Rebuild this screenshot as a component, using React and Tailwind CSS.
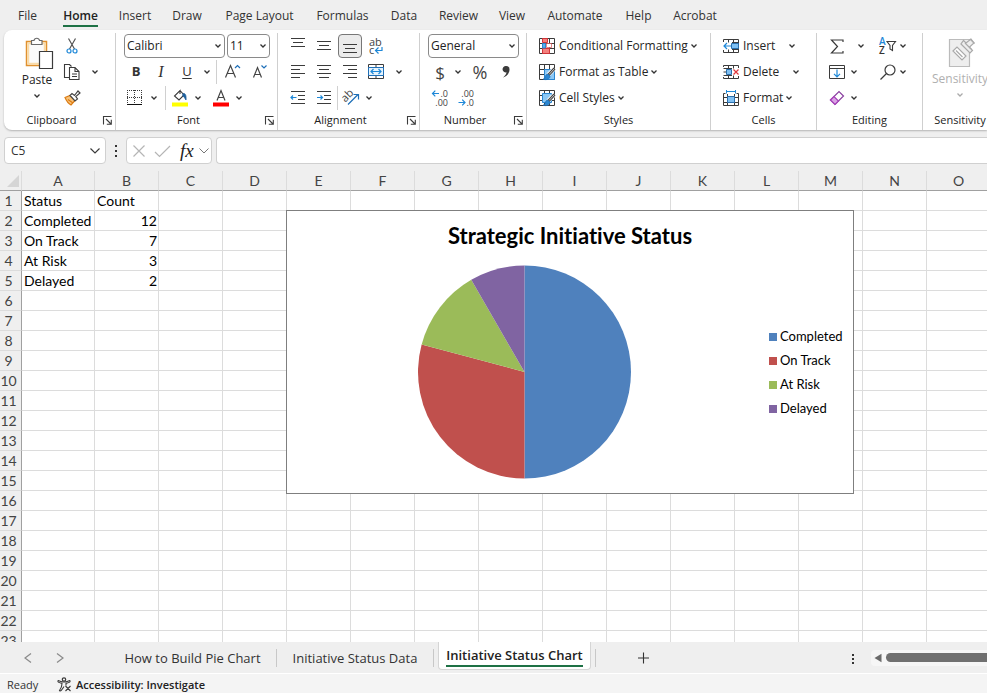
import React from "react";

const UI = "font-['Open_Sans','Noto_Sans',sans-serif]";
const CELL = "font-['Lato','Open_Sans',sans-serif] [font-variant-ligatures:none]";

const MENU = [
  ["File", "w-[37px]"],
  ["Home", "w-[69px]"],
  ["Insert", "w-[40px]"],
  ["Draw", "w-[64px]"],
  ["Page Layout", "w-[81px]"],
  ["Formulas", "w-[85px]"],
  ["Data", "w-[38px]"],
  ["Review", "w-[71px]"],
  ["View", "w-[36px]"],
  ["Automate", "w-[90px]"],
  ["Help", "w-[37px]"],
  ["Acrobat", "w-[76px]"],
];

const COLUMNS = "ABCDEFGHIJKLMNO".split("");
const ROWS = Array.from({ length: 23 }, (_, i) => i + 1);
const DATA = [
  ["Status", "Count"],
  ["Completed", 12],
  ["On Track", 7],
  ["At Risk", 3],
  ["Delayed", 2],
];

const SLICES = [
  { label: "Completed", value: 12, fill: "fill-[#4f81bd]", bg: "bg-[#4f81bd]" },
  { label: "On Track", value: 7, fill: "fill-[#c0504d]", bg: "bg-[#c0504d]" },
  { label: "At Risk", value: 3, fill: "fill-[#9bbb59]", bg: "bg-[#9bbb59]" },
  { label: "Delayed", value: 2, fill: "fill-[#8064a2]", bg: "bg-[#8064a2]" },
];

function Svg({ w = 18, h = 18, className = "", children }) {
  return (
    <svg
      width={w}
      height={h}
      viewBox={`0 0 ${w} ${h}`}
      fill="none"
      stroke="#3b3b3b"
      strokeWidth="1.2"
      className={`shrink-0 overflow-visible ${className}`}
      aria-hidden="true"
    >
      {children}
    </svg>
  );
}

function Chevron({ color = "#333" }) {
  return (
    <Svg w={8} h={6}>
      <path d="M1.500 1.500 4 4l2.500-2.500" stroke={color} strokeWidth="1.300" />
    </Svg>
  );
}

function More({ label, className = "" }) {
  return (
    <button aria-label={label} className={`flex h-6 w-[10px] shrink-0 items-center justify-center ${className}`}>
      <Chevron />
    </button>
  );
}

function Tool({ label, className = "w-[26px]", children }) {
  return (
    <button aria-label={label} className={`flex h-6 shrink-0 items-center justify-center ${className}`}>
      {children}
    </button>
  );
}

function Row({ className = "", children }) {
  return <div className={`flex h-[26px] items-center ${className}`}>{children}</div>;
}

function Rule() {
  return <div className="h-6 w-px shrink-0 bg-[#d0d0d0]" />;
}

function Group({ name, width, pad = "", launcher = false, last = false, children }) {
  return (
    <section
      aria-label={name}
      className={`flex shrink-0 flex-col ${width} ${last ? "" : "border-r border-[#cfcfcf]"}`}
    >
      <div className={`h-[79px] ${pad}`}>{children}</div>
      <div className="flex h-4 items-center text-[11px] text-[#222]">
        <span className="flex-1 text-center">{name}</span>
        {launcher && (
          <button aria-label={`${name} settings`} className="flex h-4 w-4 items-center justify-center">
            <Svg w={9} h={9}>
              <path d="M.5 8.500V.5h8M3 3l5 5M8.300 3.800v4.500H3.800" strokeWidth="1.100" />
            </Svg>
          </button>
        )}
      </div>
    </section>
  );
}

function Combo({ label, value, options, className }) {
  return (
    <div className={`grid h-6 shrink-0 items-center rounded border border-[#8a8a8a] bg-white ${className}`}>
      <select
        aria-label={label}
        defaultValue={value}
        className="col-start-1 row-start-1 h-full w-full appearance-none bg-transparent pl-[2px] text-[12px] text-[#222] outline-none"
      >
        {options.map((o) => (
          <option key={o}>{o}</option>
        ))}
      </select>
      <span className="pointer-events-none col-start-1 row-start-1 justify-self-end pr-[2px]">
        <Chevron />
      </span>
    </div>
  );
}

function Lines({ d }) {
  return (
    <Svg w={16} h={16}>
      <path d={d} strokeWidth="1" />
    </Svg>
  );
}

function TableBase({ children }) {
  return (
    <Svg w={16} h={16}>
      <path d="M.5.5h15v15H.5zM.5 5.500h15M.5 10.500h15M5.500.5v15M10.500.5v15" strokeWidth="1" />
      {children}
    </Svg>
  );
}

const Brush = () => (
  <>
    <path d="M15.500 4.500 9 11" stroke="#fff" strokeWidth="4" />
    <path d="M15.500 4.500 9.500 11" stroke="#444" strokeWidth="2.600" />
    <path d="M15 5 10 10.500" stroke="#ddd" strokeWidth=".8" />
    <path d="M9 10c-2 0-2.500 2-3 3.500-.3 1-1 1.500-2 1.700 3 1 7 .3 7-3z" fill="#2a86d1" stroke="#1d69ad" strokeWidth=".7" />
  </>
);

const ConditionalIcon = () => (
  <TableBase>
    <path d="M3.500.5h5v4h-5zM3.500 10.500h7v5h-7z" fill="#f4807d" stroke="#d13438" strokeWidth="1" />
    <path d="M3.500 5.500h3v4.500h-3z" fill="#5bb0ec" stroke="#2a86d1" strokeWidth="1" />
    <path d="M7.500 5.500h5v4h-5z" fill="#fff" stroke="#d13438" strokeWidth=".6" />
  </TableBase>
);

const FormatTableIcon = () => (
  <TableBase>
    <path d="M5.500 5.500h10v10h-10z" fill="#8cc8f5" stroke="#2a86d1" strokeWidth="1" />
    <Brush />
  </TableBase>
);

const CellStylesIcon = () => (
  <TableBase>
    <path d="M3.500 3.500h9v9h-9z" fill="#8cc8f5" stroke="#2a86d1" strokeWidth="1" />
    <Brush />
  </TableBase>
);

const InsertCellsIcon = () => (
  <Svg w={16} h={16}>
    <path d="M.5 4V1.500h15v13H.5V12M5.500 1.500v3M10.500 1.500v13M5.500 11.500v3M9 4.500h6.500M9 11.500h6.500" strokeWidth="1" />
    <path d="M8.500 5.500h7v5h-7z" fill="#7fc0f3" stroke="#2a6fad" strokeWidth="1" />
    <path d="M8 8H1M4 5 1 8l3 3" stroke="#1e88d8" />
  </Svg>
);

const DeleteCellsIcon = () => (
  <Svg w={16} h={16}>
    <path d="M.5 3V1.500h15V4M.5 13v1.500h15V12M5.500 1.500v3M10.500 1.500v3M5.500 11.500v3M10.500 11.500v3M.5 4.500H9M.5 11.500H9M.5 8H3" strokeWidth="1" />
    <path d="M3.500 5.500h5v5h-5z" fill="#7fc0f3" stroke="#2a6fad" strokeWidth="1" />
    <path d="m10.500 5.500 5 5M15.500 5.500l-5 5" stroke="#e0383c" />
  </Svg>
);

const FormatCellsIcon = () => (
  <Svg w={16} h={16}>
    <path d="M2.500 3.500H.5v12h15v-12h-2M.5 7.500h15M.5 12.500h15M4.500 4v11.500M11.500 4v11.500" strokeWidth="1" />
    <path d="M4.500 6.500h7v6h-7z" fill="#7fc0f3" stroke="#2a6fad" strokeWidth="1" />
    <path d="M3 1.500h10M3.500 0v3.500M12.500 0v3.500" stroke="#1e88d8" strokeWidth="1" />
  </Svg>
);

function Labelled({ icon, text, textWidth = "" }) {
  return (
    <button className="flex h-6 items-center text-[12px] text-[#262626]">
      {icon}
      <span className={`mr-[2px] ml-1 whitespace-nowrap text-left ${textWidth}`}>{text}</span>
      <Chevron />
    </button>
  );
}

function DecimalIcon({ top, bottom, arrowTop }) {
  return (
    <Svg w={18} h={18}>
      <g fill="#444" stroke="none" fontSize="9" fontFamily="Open Sans, sans-serif">
        <text x="17" y="8" textAnchor="end">{top}</text>
        <text x="17" y="17" textAnchor="end">{bottom}</text>
      </g>
      <path
        d={arrowTop ? "M8 4.500H1.500M4.300 1.700 1.500 4.500l2.800 2.800" : "M1.500 13.500H8M5.200 10.700 8 13.500l-2.800 2.800"}
        stroke="#1e88d8"
      />
    </Svg>
  );
}

function Ribbon() {
  return (
    <div className="ml-1 flex h-[100px] shrink-0 overflow-hidden rounded-l-lg bg-white pt-[3px] shadow-[0_1px_2px_rgba(0,0,0,0.25)]">
      <Group name="Clipboard" width="w-[112px]" pad="pl-[14px] flex" launcher>
        <button className="flex w-[38px] flex-col items-center pt-1 text-[12px] text-[#262626]">
          <Svg w={28} h={32} className="ml-1">
            <path d="M1.500 4.500h20v24h-20z" fill="#fff3da" stroke="#e0912f" strokeWidth="1.500" />
            <path d="M3.500 6.500h16v20h-16z" fill="#fbfbfb" stroke="#f9dba8" strokeWidth="1.500" />
            <path d="M6.500 7.500v-4H9a2.800 2.800 0 0 1 5.500 0H17v4z" fill="#fff" stroke="#6b6b6b" />
            <path d="M14.500 14.500h13v17h-13z" fill="#fff" stroke="#3b3b3b" />
          </Svg>
          <span className="pt-px leading-5">Paste</span>
          <span className="pt-[3px]"><Chevron /></span>
        </button>
        <div className="pl-[6px]">
          <Row>
            <Tool label="Cut" className="w-5">
              <Svg w={12} h={16}>
                <path d="M2.500.5 8.500 11M9.500.5 3.500 11" stroke="#555" />
                <circle cx="3" cy="13" r="2" stroke="#1e88d8" />
                <circle cx="9" cy="13" r="2" stroke="#1e88d8" />
              </Svg>
            </Tool>
          </Row>
          <Row>
            <Tool label="Copy" className="w-5">
              <Svg w={16} h={16}>
                <path d="M5 13.500H.5V.5h5l2 2" strokeWidth="1.100" />
                <path d="M5.500 3.500h5.500l4 4v8H5.500zM11 3.500v4h4M8 10h5M8 12.500h5" fill="#fff" strokeWidth="1.100" />
              </Svg>
            </Tool>
            <More label="Copy options" className="ml-2" />
          </Row>
          <Row>
            <Tool label="Format Painter" className="w-5">
              <Svg w={17} h={16}>
                <path d="m1 7.500 5-2 5 5-4 4.500C5 14 2.500 11 1 7.500z" fill="#f7c27a" stroke="#dc7b12" />
                <path d="m4 9.500 5 3.500" stroke="#dc7b12" />
                <path d="m6 5.500 2-2 2.500 2L14 1l2 2-4.200 3.500L13.500 9l-2.500 2z" fill="#fff" stroke="#444" />
              </Svg>
            </Tool>
          </Row>
        </div>
      </Group>

      <Group name="Font" width="w-[162px]" pad="pl-2" launcher>
        <Row className="gap-[2px]">
          <Combo label="Font name" value="Calibri" options={["Calibri", "Arial", "Cambria"]} className="w-[101px]" />
          <Combo label="Font size" value="11" options={["10", "11", "12", "14"]} className="w-[43px]" />
        </Row>
        <Row>
          <Tool label="Bold" className="w-6"><span className="text-[13px] font-bold text-[#333]">B</span></Tool>
          <Tool label="Italic"><span className="font-['Liberation_Serif',serif] text-[16px] italic text-[#333]">I</span></Tool>
          <Tool label="Underline"><span className="text-[13px] text-[#333] underline underline-offset-2">U</span></Tool>
          <More label="Underline options" className="mr-1 ml-[2px]" />
          <Rule />
          <Tool label="Increase font size" className="w-[30px]">
            <Svg w={17} h={16}>
              <path d="M1.500 13.500 6.500 1.500l5 12M3.200 9.500h6.600" stroke="#444" />
              <path d="m11 4 2.500-2.500L16 4" stroke="#1e6fb8" />
            </Svg>
          </Tool>
          <Tool label="Decrease font size" className="w-6">
            <Svg w={15} h={16}>
              <path d="M1.500 13.500 5.500 3.500l4 10M2.900 10.500h5.200" stroke="#444" />
              <path d="m9.500 1.500 2.500 2.500 2.500-2.500" stroke="#1e6fb8" />
            </Svg>
          </Tool>
        </Row>
        <Row>
          <Tool label="Borders" className="w-[22px]">
            <Svg w={16} h={16}>
              <path d="M0 .5h15M0 7.500h15M.5 0v13M7.500 0v13M14.500 0v13" strokeWidth="1" strokeDasharray="1 1" />
              <path d="M0 14.500h15" stroke="#111" strokeWidth="1" />
            </Svg>
          </Tool>
          <More label="Border options" className="mr-[6px] ml-[3px]" />
          <Rule />
          <Tool label="Fill color" className="ml-[2px] w-6">
            <Svg w={16} h={18}>
              <path d="M0 13.500h16v4H0z" fill="#ff0" stroke="none" />
              <path d="m8 1.500 4 4.500-5 5-4.500-4L8 1.500V5" strokeWidth="1.100" />
              <path d="M10.500 5c2.500-1.500 4 1 3.500 6-1-1-1.500-3.500-3.500-4" fill="#1e5f9c" stroke="#1e5f9c" strokeWidth=".8" />
            </Svg>
          </Tool>
          <More label="Fill color options" className="ml-px" />
          <Tool label="Font color" className="ml-[6px] w-6">
            <Svg w={16} h={18}>
              <path d="M0 13.500h16v4H0z" fill="#f00" stroke="none" />
              <path d="M4 11.500 8 1.500l4 10M5.300 8.500h5.400" stroke="#444" />
            </Svg>
          </Tool>
          <More label="Font color options" className="ml-px" />
        </Row>
      </Group>

      <Group name="Alignment" width="w-[142px]" pad="pl-[7px]" launcher>
        <Row>
          <Tool label="Top align"><Lines d="M1 .5h14M3 4.500h10M1 8.500h14" /></Tool>
          <Tool label="Middle align"><Lines d="M1 3.500h14M3 7.500h10M1 11.500h14" /></Tool>
          <button aria-label="Bottom align" aria-pressed="true" className="mx-px flex h-6 w-6 items-center justify-center rounded border border-[#777] bg-[#ebebeb]">
            <Lines d="M1 6.500h14M3 10.500h10M1 14.500h14" />
          </button>
          <Tool label="Wrap text">
            <Svg w={14} h={16}>
              <g fill="#444" stroke="none" fontSize="11" fontFamily="Open Sans, sans-serif">
                <text x="0" y="8">ab</text>
                <text x="0" y="16">c</text>
              </g>
              <path d="M13 9v3.500H7M9.500 9.500l-3 3 3 3" stroke="#1e88d8" />
            </Svg>
          </Tool>
        </Row>
        <Row>
          <Tool label="Align left"><Lines d="M1 1.500h14M1 5.500h9M1 9.500h14M1 13.500h9" /></Tool>
          <Tool label="Center"><Lines d="M1 1.500h14M3 5.500h10M1 9.500h14M3 13.500h10" /></Tool>
          <Tool label="Align right"><Lines d="M1 1.500h14M6 5.500h9M1 9.500h14M6 13.500h9" /></Tool>
          <Tool label="Merge and center">
            <Svg w={16} h={16}>
              <path d="M.5.5h15v14H.5zM8 .5v3M8 11.500v3" strokeWidth="1" />
              <path d="M.5 3.500h15v8H.5z" fill="#e6f3fc" stroke="#1e6fb8" strokeWidth="1" />
              <path d="M3 7.500h10M5.500 5 3 7.500 5.500 10M10.500 5 13 7.500 10.500 10" stroke="#1e88d8" />
            </Svg>
          </Tool>
          <More label="Merge options" className="ml-[5px]" />
        </Row>
        <Row>
          <Tool label="Decrease indent">
            <Svg w={16} h={16}>
              <path d="M1 1.500h14M8 5.500h7M8 9.500h7M1 13.500h14" strokeWidth="1" />
              <path d="M6.500 7.500H1M3 5.500l-2 2 2 2" stroke="#1e88d8" />
            </Svg>
          </Tool>
          <Tool label="Increase indent">
            <Svg w={16} h={16}>
              <path d="M1 1.500h14M8 5.500h7M8 9.500h7M1 13.500h14" strokeWidth="1" />
              <path d="M1 7.500h5.500M4.500 5.500l2 2-2 2" stroke="#1e88d8" />
            </Svg>
          </Tool>
          <Rule />
          <Tool label="Orientation">
            <Svg w={18} h={18}>
              <text x="0" y="10" transform="rotate(-45 6 8)" fill="#444" stroke="none" fontSize="11" fontFamily="Open Sans, sans-serif">ab</text>
              <path d="M6 15.500 16 5.500M11.500 5.500h5v5" stroke="#1e6fb8" />
            </Svg>
          </Tool>
          <More label="Orientation options" />
        </Row>
      </Group>

      <Group name="Number" width="w-[107px]" pad="pl-2" launcher>
        <Row>
          <Combo label="Number format" value="General" options={["General", "Number", "Currency"]} className="w-[91px]" />
        </Row>
        <Row>
          <Tool label="Currency" className="w-6"><span className="text-[17px] leading-none text-[#444]">$</span></Tool>
          <More label="Currency options" className="mr-1 ml-px" />
          <Tool label="Percent"><span className="text-[18px] leading-none text-[#444]">%</span></Tool>
          <Tool label="Comma style">
            <Svg w={10} h={14}>
              <path d="M5 1a3.200 3.200 0 1 0 .5 6.300C5.300 9.500 4 11 2 12.500c4-1 6.500-4.500 6.500-8A3.400 3.400 0 0 0 5 1z" fill="#3b3b3b" stroke="none" />
            </Svg>
          </Tool>
        </Row>
        <Row>
          <Tool label="Increase decimal" className="w-6"><DecimalIcon top=".0" bottom=".00" arrowTop /></Tool>
          <Tool label="Decrease decimal" className="w-7"><DecimalIcon top=".00" bottom=".0" /></Tool>
        </Row>
      </Group>

      <Group name="Styles" width="w-[184px]" pad="pl-3">
        <Row><Labelled icon={<ConditionalIcon />} text="Conditional Formatting" /></Row>
        <Row><Labelled icon={<FormatTableIcon />} text="Format as Table" /></Row>
        <Row><Labelled icon={<CellStylesIcon />} text="Cell Styles" /></Row>
      </Group>

      <Group name="Cells" width="w-[106px]" pad="pl-3">
        <Row><Labelled icon={<InsertCellsIcon />} text="Insert" textWidth="w-[43px]" /></Row>
        <Row><Labelled icon={<DeleteCellsIcon />} text="Delete" textWidth="w-[47px]" /></Row>
        <Row><Labelled icon={<FormatCellsIcon />} text="Format" /></Row>
      </Group>

      <Group name="Editing" width="w-[106px]" pad="pl-2">
        <Row>
          <Tool label="AutoSum" className="w-6">
            <Svg w={14} h={15}>
              <path d="M13 3V1H1.500l6 6.500-6 6.500H13v-2" />
            </Svg>
          </Tool>
          <More label="AutoSum options" className="mr-[11px] ml-[7px]" />
          <Tool label="Sort and filter" className="w-5">
            <Svg w={17} h={18}>
              <g stroke="none" fontSize="10" fontWeight="600" fontFamily="Open Sans, sans-serif">
                <text x="0" y="8" fill="#1e88d8">A</text>
                <text x="0" y="17" fill="#333">Z</text>
              </g>
              <path d="M8 4.500h8.500L13.500 8.500v5L11 12V8.500z" strokeWidth="1.100" />
            </Svg>
          </Tool>
          <More label="Sort options" className="ml-px" />
        </Row>
        <Row>
          <Tool label="Fill" className="w-6">
            <Svg w={16} h={15}>
              <path d="M.5.5h15v13H.5zM.5 3.500h15" strokeWidth="1" />
              <path d="M8 4.500v7M5 8.800l3 3 3-3" stroke="#1e88d8" />
            </Svg>
          </Tool>
          <More label="Fill options" className="mr-[18px]" />
          <Tool label="Find" className="w-5">
            <Svg w={17} h={17}>
              <circle cx="11" cy="6" r="5" />
              <path d="M7.500 9.500 1.500 15.500" />
            </Svg>
          </Tool>
          <More label="Find options" className="ml-px" />
        </Row>
        <Row>
          <Tool label="Clear" className="w-6">
            <Svg w={16} h={16}>
              <path d="M1.500 10 10 1.500l4.500 4.500L6 14.500z" fill="#fff" stroke="#8a3fa0" />
              <path d="M1.500 10 5 6.500l4.500 4.500L6 14.500z" fill="#d9a3e4" stroke="#a43fb8" />
            </Svg>
          </Tool>
          <More label="Clear options" />
        </Row>
      </Group>

      <Group name="Sensitivity" width="w-[74px]" last>
        <button disabled className="flex w-full flex-col items-center pt-[2px] text-[12px] text-[#b0b0b0]">
          <Svg w={28} h={34} className="ml-1">
            <path d="M1.500 4.500h20v27h-20z" fill="#eee" stroke="#bbb" />
            <path d="m5 16 4-4 9 9-4 4z" fill="#fff" stroke="#aaa" />
            <path d="m8 15.500 6.500 6.500" stroke="#aaa" />
            <path d="m13 9 9 9 2.500-2.500-3-3.500 4.500-4-3-4-5 4-2.500-2.500z" fill="#eee" stroke="#aaa" />
            <path d="m17 8 6 6M22 4l4.500 4.500" stroke="#aaa" />
          </Svg>
          <span className="leading-5">Sensitivity</span>
          <span className="pt-[3px]"><Chevron color="#aaa" /></span>
        </button>
      </Group>
    </div>
  );
}

function FormulaBar() {
  const box = "flex h-[27px] items-center rounded border border-[#d0d0d0] bg-white";
  return (
    <div className="flex h-[41px] shrink-0 items-center pl-1">
      <div className={`${box} w-[102px] pr-1`}>
        <input aria-label="Name box" defaultValue="C5" className="min-w-0 flex-1 pl-[6px] text-[12px] text-[#333] outline-none" />
        <button aria-label="Name box options">
          <Svg w={12} h={8}><path d="m1.500 1.500 4.500 4.500 4.500-4.500" /></Svg>
        </button>
      </div>
      <div className="flex w-5 justify-center">
        <Svg w={4} h={12}>
          <path d="M1 0h2v2H1zM1 5h2v2H1zM1 10h2v2H1z" fill="#333" stroke="none" />
        </Svg>
      </div>
      <div className={`${box} w-[86px] gap-2 pl-[5px]`}>
        <button aria-label="Cancel">
          <Svg w={14} h={14}><path d="m1.500 1.500 11 11M12.500 1.500l-11 11" stroke="#b5b5b5" /></Svg>
        </button>
        <button aria-label="Enter">
          <Svg w={17} h={14}><path d="m1 8 4.500 4.500L16 2" stroke="#b5b5b5" /></Svg>
        </button>
        <button aria-label="Insert function" className="ml-px flex items-center gap-1 font-['Liberation_Serif',serif] text-[19px] leading-5 italic text-[#222]">
          <span>fx</span>
          <Svg w={12} h={8}><path d="m1.500 1.500 4.500 4.500 4.500-4.500" stroke="#777" strokeWidth="1" /></Svg>
        </button>
      </div>
      <div className={`${box} ml-1 flex-1 rounded-r-none border-r-0`}>
        <input aria-label="Formula" className="w-full px-2 text-[12px] outline-none" />
      </div>
    </div>
  );
}

function Pie() {
  const total = SLICES.reduce((sum, s) => sum + s.value, 0);
  const point = (v) => {
    const a = (v / total) * 2 * Math.PI;
    return `${106.5 + 106.5 * Math.sin(a)} ${107 - 106.5 * Math.cos(a)}`;
  };
  let start = 0;
  return (
    <svg width="214" height="214" viewBox="0 0 214 214" role="img" aria-label="Strategic Initiative Status pie chart">
      {SLICES.map((s) => {
        const from = start;
        start += s.value;
        return (
          <path key={s.label} className={s.fill} d={`M106.500 107L${point(from)}A106.500 106.500 0 0 1 ${point(start)}Z`} />
        );
      })}
    </svg>
  );
}

function Chart() {
  return (
    <figure className={`absolute top-[39px] left-[286px] h-[284px] w-[568px] border border-[#7f7f7f] bg-white ${CELL}`}>
      <figcaption className="pt-[11px] text-center text-[22px] leading-7 font-bold text-black">
        Strategic Initiative Status
      </figcaption>
      <div className="flex items-center pt-[15px] pl-[131px]">
        <Pie />
        <ul className="mt-[2px] ml-auto flex w-[84px] flex-col text-[13px] text-black">
          {SLICES.map((s) => (
            <li key={s.label} className="flex h-6 items-center gap-[3px]">
              <span className={`h-2 w-2 ${s.bg}`} />
              {s.label}
            </li>
          ))}
        </ul>
      </div>
    </figure>
  );
}

function Sheet() {
  return (
    <main className="relative min-h-0 flex-1 overflow-hidden bg-white">
      <table className={`w-[991px] table-fixed border-separate border-spacing-0 text-[14px] leading-[19px] ${CELL}`}>
        <colgroup>
          <col className="w-[22px]" />
          {COLUMNS.map((c) => (
            <col key={c} className={c === "A" ? "w-[73px]" : "w-[64px]"} />
          ))}
        </colgroup>
        <thead>
          <tr className="h-5 bg-[#efefef] text-[#444]">
            <th aria-label="Select all" className="border-r border-b border-r-[#dcdcdc] border-b-[#a0a0a0] p-0">
              <Svg w={12} h={12} className="mr-[2px] ml-auto"><path d="M12 0v12H0z" fill="#d5d5d5" stroke="none" /></Svg>
            </th>
            {COLUMNS.map((c) => (
              <th key={c} scope="col" className="border-r border-b border-r-[#dcdcdc] border-b-[#a0a0a0] p-0 font-normal">
                {c}
              </th>
            ))}
          </tr>
        </thead>
        <tbody>
          {ROWS.map((r) => (
            <tr key={r} className="h-5">
              <th scope="row" className="border-r border-b border-r-[#a0a0a0] border-b-[#dcdcdc] bg-[#efefef] p-0 pr-1 font-normal text-[#444]">
                {r}
              </th>
              {COLUMNS.map((c, i) => {
                const v = DATA[r - 1]?.[i];
                return (
                  <td
                    key={c}
                    className={`border-r border-b border-[#dcdcdc] p-0 pr-px pl-[2px] whitespace-nowrap text-black ${typeof v === "number" ? "text-right" : ""}`}
                  >
                    {v}
                  </td>
                );
              })}
            </tr>
          ))}
        </tbody>
      </table>
      <Chart />
    </main>
  );
}

function SheetTabs() {
  return (
    <nav aria-label="Sheets" className="flex h-8 shrink-0 items-center border-b border-white bg-[#efefef] text-[13px] text-[#333]">
      <button aria-label="Previous sheet" className="ml-[22px]">
        <Svg w={12} h={12}><path d="M9 1.500 3 6l6 4.500" stroke="#8a8a8a" /></Svg>
      </button>
      <button aria-label="Next sheet" className="ml-5">
        <Svg w={12} h={12}><path d="m3 1.500 6 4.500-6 4.500" stroke="#8a8a8a" /></Svg>
      </button>
      <button className="ml-[43px] w-[167px] pt-[2px] whitespace-nowrap">How to Build Pie Chart</button>
      <span className="h-[18px] w-px bg-[#c8c8c8]" />
      <button className="w-[156px] pt-[2px] whitespace-nowrap">Initiative Status Data</button>
      <span className="h-[18px] w-px bg-[#c8c8c8]" />
      <button aria-current="page" className="ml-1 flex h-7 w-[153px] shrink-0 justify-center self-start rounded-b border-x border-b border-[#d5d5d5] bg-white pt-1 font-semibold text-[#222]">
        <span className="h-[21px] border-b-2 border-[#1e7145] whitespace-nowrap leading-[18px]">Initiative Status Chart</span>
      </button>
      <span className="ml-1 h-[18px] w-px bg-[#c8c8c8]" />
      <button aria-label="New sheet" className="ml-[41px]">
        <Svg w={12} h={12}><path d="M6.500 .5v11M1 6h11" stroke="#333" strokeWidth="1.100" /></Svg>
      </button>
      <div className="ml-auto flex w-[136px] items-center">
        <Svg w={4} h={12}>
          <path d="M1 2h2v2H1zM1 6h2v2H1zM1 10h2v2H1z" fill="#333" stroke="none" />
        </Svg>
        <div className="ml-4 flex h-4 flex-1 items-center gap-1 rounded-l bg-[#f6f6f6] pl-[3px]">
          <button aria-label="Scroll left">
            <Svg w={8} h={10}><path d="M7.500.8v8.400L.5 5z" fill="#6b6b6b" stroke="none" /></Svg>
          </button>
          <span className="h-[9px] flex-1 rounded-l-full bg-[#707070]" />
        </div>
      </div>
    </nav>
  );
}

function StatusBar() {
  return (
    <footer className="flex h-[19px] shrink-0 items-center bg-[#f4f4f4] pt-[2px] pl-[7px] text-[11px] leading-4 text-[#333]">
      <span className="w-[50px]">Ready</span>
      <button className="flex items-center gap-1 font-semibold text-[#222]">
        <Svg w={15} h={15}>
          <circle cx="7" cy="2.500" r="1.700" />
          <path d="M1 3.500c-.5 1.500 0 1.700 4 3 0 3-.5 4.500-2.500 7 1 1 1.700.5 4.500-4M13 3.500c.5 1.500 0 1.700-4 3v2M1 3.500c2 .3 3 1.500 6 1.500s4-1.200 6-1.500M8.500 9l5 5M13.500 9l-5 5" strokeWidth="1.100" />
        </Svg>
        Accessibility: Investigate
      </button>
    </footer>
  );
}

export default function App() {
  return (
    <div className={`flex h-screen flex-col overflow-hidden bg-[#efefef] ${UI}`}>
      <nav aria-label="Ribbon tabs" className="flex h-[30px] shrink-0 items-center pt-[2px] pl-[9px] text-[12px] leading-[18px] text-[#333]">
        {MENU.map(([name, width]) => (
          <button key={name} className={`flex h-full shrink-0 items-center justify-center ${width}`}>
            {name === "Home" ? (
              <span className="mt-[2px] h-5 border-b-2 border-[#1e7145] font-semibold text-[#222]">{name}</span>
            ) : (
              <span className="whitespace-nowrap">{name}</span>
            )}
          </button>
        ))}
      </nav>
      <Ribbon />
      <FormulaBar />
      <Sheet />
      <SheetTabs />
      <StatusBar />
    </div>
  );
}
